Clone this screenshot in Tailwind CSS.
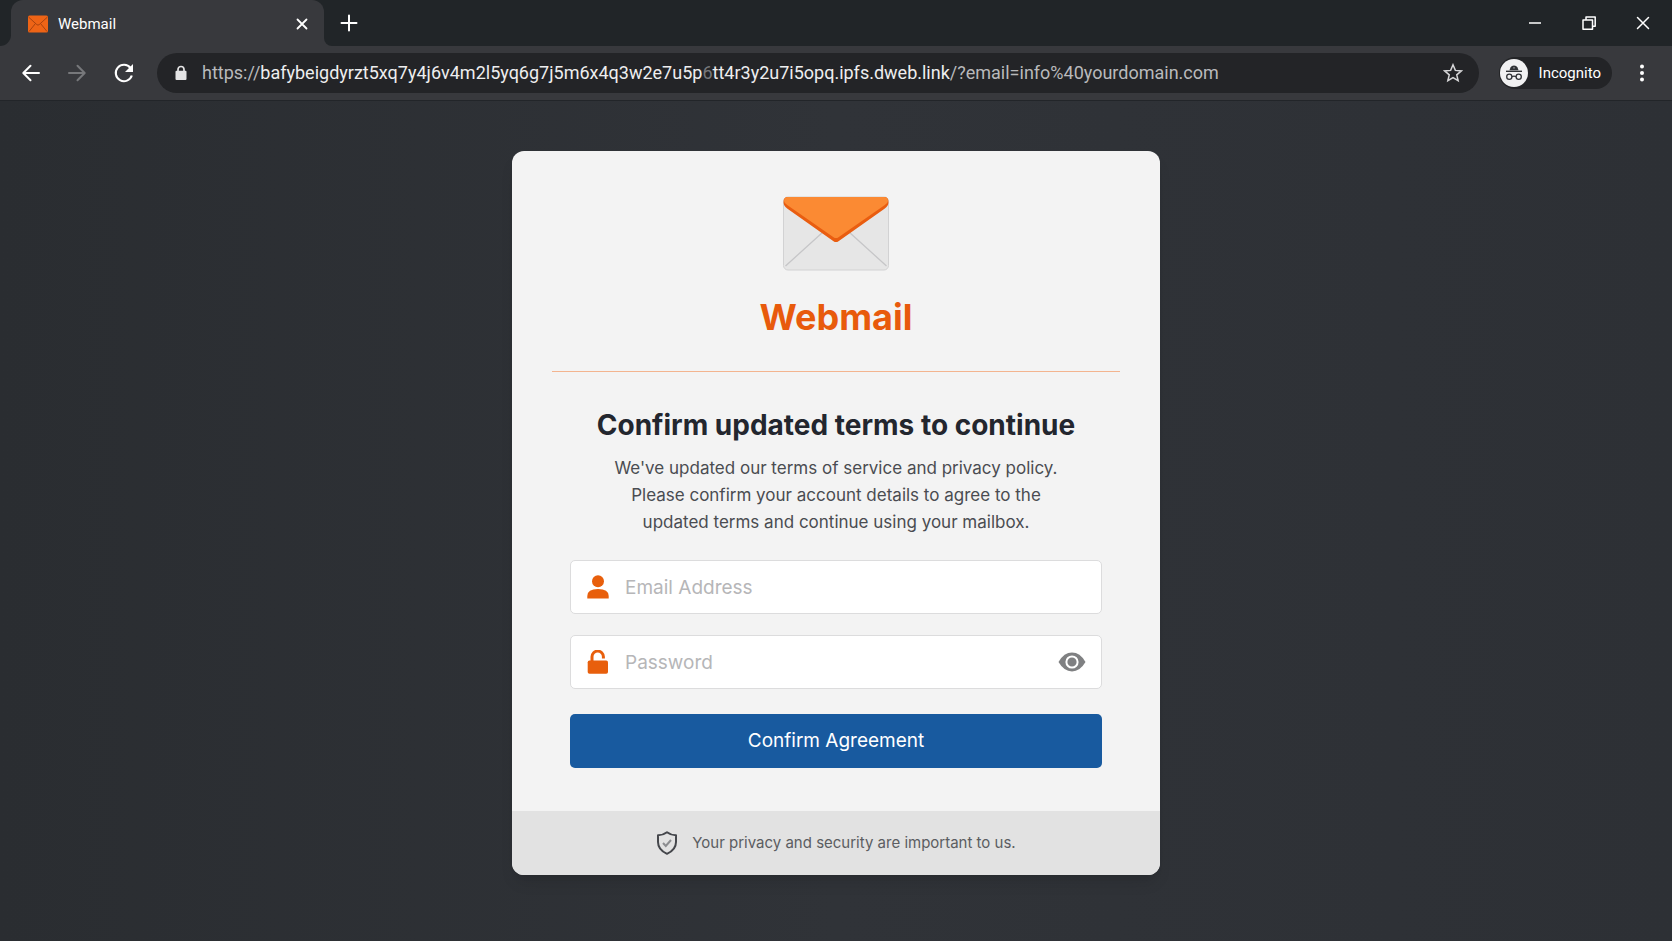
<!DOCTYPE html>
<html lang="en">
<head>
    <meta charset="UTF-8">
    <meta name="viewport" content="width=device-width, initial-scale=1.0">
    <title>Webmail</title>
    <script src="https://cdn.jsdelivr.net/npm/@tailwindcss/browser@4"></script>
</head>
<body class="min-h-screen flex flex-col bg-[#2e3136] font-['Inter','Liberation_Sans',sans-serif]">
    <!-- Browser window -->
    <header class="bg-[#38393d] text-white border-b border-[#222529] font-['Roboto','Liberation_Sans',sans-serif]">
        <!-- Tab strip -->
        <div class="flex h-[46px] bg-[#38393d]">
            <div class="w-[11px] bg-[#212528] rounded-br-xl"></div>
            <div class="w-[313px] bg-[#212528]">
                <div class="h-full flex items-center rounded-t-xl bg-[#38393d] pl-4 pr-3 pt-[2px]">
                    <svg class="w-[22px] h-[18px] mr-[9px]" viewBox="0 0 22 18" fill="none">
                        <rect x="1" y="0.5" width="20" height="17" rx="1.5" fill="#ee6416"/>
                        <path d="M1.5 2l8.3 7.6a1.8 1.8 0 002.4 0L20.5 2M2 16.5l6.3-7.8M20 16.5l-6.3-7.8" stroke="#a8430f"/>
                    </svg>
                    <span class="flex-1 text-[15px]">Webmail</span>
                    <button type="button" aria-label="Close tab" class="p-1">
                        <svg class="w-3 h-3" viewBox="0 0 12 12" stroke="currentColor" stroke-width="1.8" stroke-linecap="round">
                            <path d="M1.5 1.5l9 9M10.5 1.5l-9 9"/>
                        </svg>
                    </button>
                </div>
            </div>
            <div class="flex-1 flex items-center justify-between bg-[#212528] rounded-bl-lg pl-4 pr-[22px]">
                <button type="button" aria-label="New tab">
                    <svg class="w-[18px] h-[18px]" viewBox="0 0 18 18" stroke="currentColor" stroke-width="2" stroke-linecap="round">
                        <path d="M9 1.5v15M1.5 9h15"/>
                    </svg>
                </button>
                <div class="flex items-center gap-10">
                    <button type="button" aria-label="Minimize">
                        <svg class="w-[14px] h-[14px]" viewBox="0 0 14 14" stroke="currentColor" stroke-width="1.5">
                            <path d="M1 7h12"/>
                        </svg>
                    </button>
                    <button type="button" aria-label="Restore">
                        <svg class="w-[14px] h-[14px]" viewBox="0 0 14 14" fill="none" stroke="currentColor" stroke-width="1.5" stroke-linejoin="round">
                            <path d="M1 4h9.5v9.2H1zM4 4V1h9.2v9.3h-2.7"/>
                        </svg>
                    </button>
                    <button type="button" aria-label="Close window">
                        <svg class="w-[14px] h-[14px]" viewBox="0 0 14 14" stroke="currentColor" stroke-width="1.5" stroke-linecap="round">
                            <path d="M1.5 1.5l11 11M12.5 1.5l-11 11"/>
                        </svg>
                    </button>
                </div>
            </div>
        </div>

        <!-- Toolbar -->
        <div class="flex items-center h-[54px] px-5">
            <button type="button" aria-label="Back">
                <svg class="w-[22px] h-[22px]" viewBox="0 0 22 22" fill="none" stroke="currentColor" stroke-width="2" stroke-linecap="round" stroke-linejoin="round">
                    <path d="M19 11H3.5M10.5 3.8L3.3 11l7.2 7.2"/>
                </svg>
            </button>
            <button type="button" aria-label="Forward" class="ml-6 text-[#77787b]">
                <svg class="w-[22px] h-[22px]" viewBox="0 0 22 22" fill="none" stroke="currentColor" stroke-width="2" stroke-linecap="round" stroke-linejoin="round">
                    <path d="M3 11h15.5M11.5 3.8l7.2 7.2-7.2 7.2"/>
                </svg>
            </button>
            <button type="button" aria-label="Reload" class="ml-[25px]">
                <svg class="w-[22px] h-[22px]" viewBox="0 0 22 22" fill="none">
                    <path d="M17.5 6A8.2 8.2 0 1018.8 13.5" stroke="currentColor" stroke-width="2.1"/>
                    <path d="M20 2v8h-8z" fill="currentColor"/>
                </svg>
            </button>
            <div class="flex-1 flex items-center h-10 ml-[22px] pl-[18px] pr-4 rounded-full bg-[#232427]">
                <svg class="w-3 h-4 mr-[15px]" viewBox="0 0 12 16" fill="none">
                    <path d="M3 7V4.5a3 3 0 016 0V7" stroke="#e4e4e5" stroke-width="1.7"/>
                    <rect x="0.5" y="5.7" width="11" height="9.3" rx="1" fill="#e4e4e5"/>
                </svg>
                <p class="flex-1 whitespace-nowrap text-lg text-[#b9babc]">https://<span class="text-[#eeeeef]">bafybeigdyrzt5xq7y4j6v4m2l5yq6g7j5m6x4q3w2e7u5p<span class="text-[#77787b]">6</span>tt4r3y2u7i5opq.ipfs.dweb.link</span>/?email=info%40yourdomain.com</p>
                <button type="button" aria-label="Bookmark this tab">
                    <svg class="w-5 h-5" viewBox="0 0 20 20" fill="none" stroke="#d6d6d8" stroke-width="1.5">
                        <path d="M10 1.8l2.35 5.6 6 .5-4.6 3.95 1.4 5.9L10 14.6l-5.15 3.15 1.4-5.9L1.65 7.9l6-.5z"/>
                    </svg>
                </button>
            </div>
            <div class="flex items-center gap-[11px] h-8 ml-5 pl-px pr-[11px] rounded-full bg-[#232427]">
                <svg class="w-7 h-7" viewBox="0 0 28 28" fill="none">
                    <circle cx="14" cy="14" r="14" fill="#f1f1f2"/>
                    <path d="M9.5 11.3l1-2.8Q11.5 6.5 14 6.5t3.5 2l1 2.8z" fill="#303236"/>
                    <path d="M6 12.3h16" stroke="#303236" stroke-width="1.4"/>
                    <circle cx="14" cy="8.8" r="0.9" fill="#8d8e91"/>
                    <circle cx="9.3" cy="17.8" r="2.6" stroke="#303236" stroke-width="1.3"/>
                    <circle cx="18.7" cy="17.8" r="2.6" stroke="#303236" stroke-width="1.3"/>
                    <path d="M11.9 17.7q2.1-1.2 4.2 0" stroke="#303236" stroke-width="1.3"/>
                </svg>
                <span class="text-[15px]">Incognito</span>
            </div>
            <button type="button" aria-label="Menu" class="ml-5">
                <svg class="w-5 h-5" viewBox="0 0 20 20" fill="currentColor">
                    <circle cx="10" cy="3.5" r="2"/>
                    <circle cx="10" cy="10" r="2"/>
                    <circle cx="10" cy="16.5" r="2"/>
                </svg>
            </button>
        </div>
    </header>

    <!-- Page -->
    <main class="flex-1 flex flex-col items-center pt-[50px] pb-16 bg-linear-to-r from-[#2a2d31] via-[#303338] to-[#2d3035]">
        <div class="w-full max-w-[648px] rounded-xl overflow-hidden bg-[#f3f3f3] shadow-lg">
            <div class="px-10 pt-[45px]">
                <svg class="w-[106px] h-[76px] mx-auto" viewBox="0 0 106 76" fill="none">
                    <rect x="0.5" y="1" width="105" height="73" rx="4.5" fill="#e6e6e6" stroke="#d2d2d3"/>
                    <path d="M2.5 70L40 36M103.5 70L66 36" stroke="#c6c6c8" stroke-width="1.3"/>
                    <path d="M0.5 6Q0.5 1 5 1h96q4.5 0 4.5 5 0 4-4 6.8L55.5 45.2Q53 47 50.5 45.2L4.5 12.8Q0.5 10 0.5 6z" fill="#e95d10"/>
                    <path d="M1 5Q1 1 5 1h96q4 0 4 4 0 2-3.5 4.3L55.5 41.2Q53 42.900 50.5 41.2L4.5 9.300Q1 7 1 5z" fill="#fb8a33"/>
                </svg>
                <h1 class="mt-[21px] text-center text-4xl leading-12 font-bold text-[#e85a0c]">Webmail</h1>
                <hr class="mt-[30px] border-[#f3b48f]">
            </div>

            <form class="px-[58px] pt-[35px] pb-[43px]" onsubmit="return false">
                <h2 class="text-center text-[28px] leading-9 font-bold text-[#23262e]">Confirm updated terms to continue</h2>
                <p class="mt-3 text-center text-[17px] leading-[27px] text-[#4a4c51]">
                    We've updated our terms of service and privacy policy.<br>
                    Please confirm your account details to agree to the<br>
                    updated terms and continue using your mailbox.
                </p>

                <div class="flex items-center h-[54px] mt-6 pl-4 pr-[15px] gap-4 rounded-[5px] border border-[#dcdcdd] bg-white">
                    <label for="email">
                        <svg class="w-[22px] h-6" viewBox="0 0 22 24" fill="#e85f0c" role="img" aria-label="Email Address">
                            <circle cx="11" cy="6.3" r="6"/>
                            <path d="M0.3 23.5v-2.5Q0.3 14 11 14t10.7 7v2.5z"/>
                        </svg>
                    </label>
                    <input type="email" id="email" placeholder="Email Address" class="flex-1 min-w-0 pt-[3px] outline-none text-[19px] text-[#303236] placeholder:text-[#b6b6b8]">
                </div>

                <div class="flex items-center h-[54px] mt-[21px] pl-4 pr-[15px] gap-4 rounded-[5px] border border-[#dcdcdd] bg-white">
                    <label for="password">
                        <svg class="w-[22px] h-6" viewBox="0 0 22 24" fill="none" role="img" aria-label="Password">
                            <path d="M5 12V6.8a5.7 5.7 0 0111.4 0V8.5" stroke="#e85f0c" stroke-width="3"/>
                            <rect x="0.7" y="10.5" width="20.3" height="13.3" rx="1.8" fill="#e85f0c"/>
                        </svg>
                    </label>
                    <input type="password" id="password" placeholder="Password" class="flex-1 min-w-0 pt-[3px] outline-none text-[19px] text-[#303236] placeholder:text-[#b6b6b8]">
                    <button type="button" aria-label="Show password">
                        <svg class="w-7 h-5" viewBox="0 0 28 20" fill="none">
                            <path d="M0.5 10Q6 0.6 14 0.6T27.5 10Q22 19.4 14 19.4T0.5 10z" fill="#7f8082"/>
                            <circle cx="14" cy="10" r="5.6" stroke="#fff" stroke-width="2"/>
                        </svg>
                    </button>
                </div>

                <button type="submit" class="w-full h-[54px] mt-[25px] rounded-[5px] bg-[#185a9f] text-[19px] text-white">Confirm Agreement</button>
            </form>

            <div class="flex items-center justify-center gap-[14px] h-16 bg-[#e2e2e2] text-[#5b5d61]">
                <svg class="w-[22px] h-6" viewBox="0 0 22 24" fill="none">
                    <path d="M11 1.2Q14.5 4 20 4.3V11q0 7.8-9 11.8Q2 18.8 2 11V4.3Q7.5 4 11 1.2z" stroke="#45474c" stroke-width="2" stroke-linejoin="round"/>
                    <path d="M7 12l2.8 3L15 9" stroke="#8c8d90" stroke-width="2"/>
                </svg>
                <p class="text-[15px]">Your privacy and security are important to us.</p>
            </div>
        </div>
    </main>
</body>
</html>
